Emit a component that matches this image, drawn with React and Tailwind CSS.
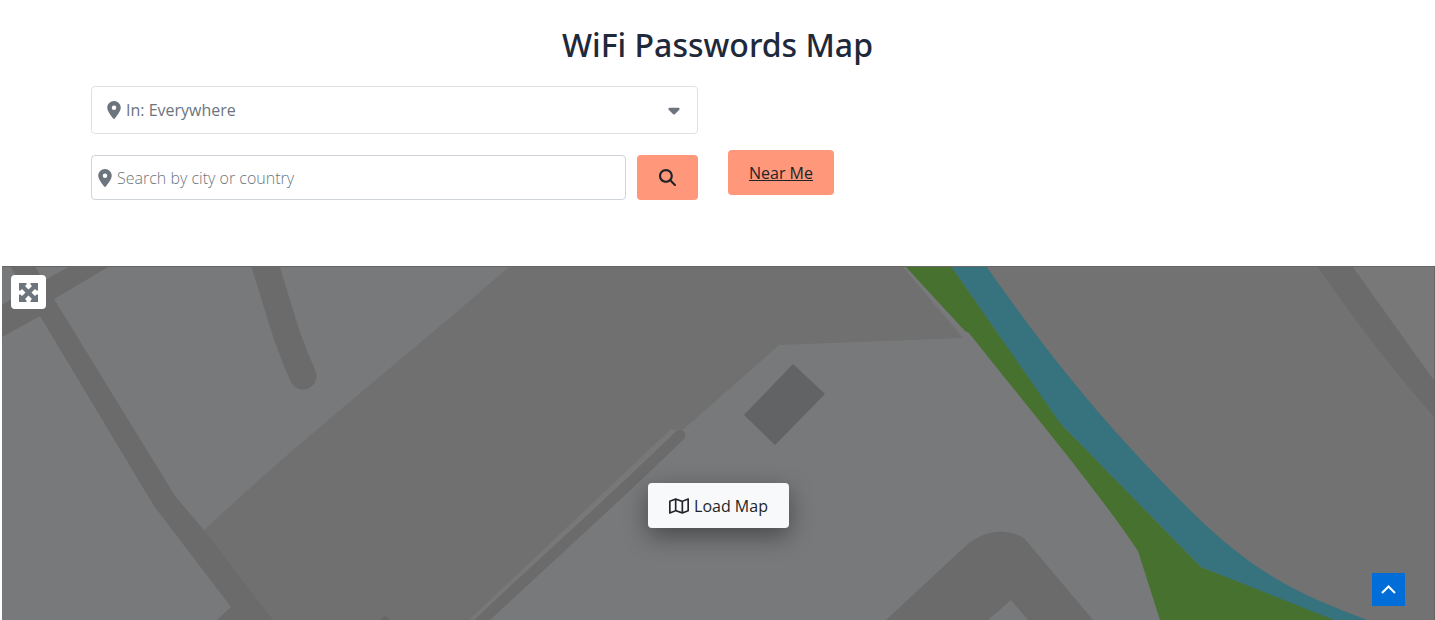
import React, { useState } from 'react';
import { FaLocationDot, FaCaretDown, FaMagnifyingGlass, FaRegMap } from 'react-icons/fa6';

const ExpandIcon = () => (
  <svg className="h-[19px] w-[19px]" viewBox="0 0 19 19" fill="currentColor" aria-hidden="true">
    <path d="M0 0H7.500V1.500L6 3L9.500 6.500L13 3L11.500 1.500V0H19V7.500H17.500L16 6L12.500 9.500L16 13L17.500 11.500H19V19H11.500V17.500L13 16L9.500 12.500L6 16L7.500 17.500V19H0V11.500H1.500L3 13L6.500 9.500L3 6L1.500 7.500H0Z" />
  </svg>
);

const MapTiles = () => (
  <svg
    className="absolute inset-0 h-full w-full"
    viewBox="2 266 1433 354"
    preserveAspectRatio="xMidYMin slice"
    aria-hidden="true"
  >
    <rect x="2" y="266" width="1433" height="354" fill="#78797a" />

    {/* Industrial area */}
    <path d="M510 266H902L963 338L779 345L684 429L672 430L471 620H270L203 531C300 440 400 362 510 266Z" fill="#707070" />
    <path d="M672 430L471 620" stroke="#787878" strokeWidth="3" />
    <path d="M680 435C620 494 550 556 480 622" stroke="#6b6b6b" strokeWidth="11" strokeLinecap="round" fill="none" />

    {/* Streets */}
    <path d="M0 306L70 266H110L54 299L175 496L203 529L273 620H217L231 607L154 506L40 316L0 338Z" fill="#6b6b6b" />
    <path d="M10 266H35L48 290L32 300Z" fill="#6b6b6b" />
    <path d="M264 262C278 304 284 334 303 376" stroke="#6b6b6b" strokeWidth="27" strokeLinecap="round" fill="none" />
    <path d="M886 620L970 542Q998 523 1024 538L1093 620H1028L1011 600L988 620Z" fill="#6b6b6b" />
    <path d="M380 620L385 616L390 620Z" fill="#666" />
    <path d="M793 364L825 394L775 445L744 415Z" fill="#626364" />

    {/* East bank */}
    <path d="M970 266H1435V620H1350L1201 560L1070 420Z" fill="#717271" />
    <path d="M1352 266H1435V382Z" fill="#787879" />
    <path d="M1317 266H1352L1435 382V418Q1375 350 1317 266Z" fill="#6b6b6b" />

    {/* Park strip and river */}
    <path d="M905 266H951L1062 425L1201 567L1338 620H1160L1138 551C1090 480 1025 404 969 333L965 331Z" fill="#47712f" />
    <path d="M951 266H986C1054 362 1105 425 1190 510C1260 580 1310 598 1367 620H1334L1201 567L1060 423Z" fill="#37727f" />

    <path d="M2 266.500H1435M1434.500 266V620" stroke="#666" strokeWidth="1" fill="none" />
  </svg>
);

const App = () => {
  const [place, setPlace] = useState('everywhere');
  const [query, setQuery] = useState('');

  return (
    <div className="flex min-h-screen flex-col bg-white font-['Open_Sans',sans-serif] text-base text-[#212529]">
      <header className="pt-6">
        <h1 className="text-center font-['Noto_Sans',sans-serif] text-[32px] leading-[42px] font-medium text-[#1e293b]">
          WiFi Passwords Map
        </h1>

        <form
          onSubmit={(e) => e.preventDefault()}
          className="mt-5 mb-[66px] grid grid-cols-2 gap-x-[30px] pr-[100px] pl-[91px]"
        >
          <div className="relative text-[#6c757d]">
            <FaLocationDot className="pointer-events-none absolute top-[15px] left-[14px] h-[18px] w-[18px]" />
            <select
              aria-label="Location"
              value={place}
              onChange={(e) => setPlace(e.target.value)}
              className="h-12 w-full appearance-none rounded border border-[#dee2e6] bg-white pl-[34px] text-base"
            >
              <option value="everywhere">In: Everywhere</option>
            </select>
            <FaCaretDown className="pointer-events-none absolute top-[15px] right-[15px] h-[18px] w-[18px]" />
          </div>

          <div className="col-start-1 mt-[21px] flex gap-[11px]">
            <div className="relative flex-1">
              <FaLocationDot className="pointer-events-none absolute top-[14px] left-[5px] h-[18px] w-[18px] text-[#6c757d]" />
              <input
                type="text"
                aria-label="Search by city or country"
                placeholder="Search by city or country"
                value={query}
                onChange={(e) => setQuery(e.target.value)}
                className="h-[45px] w-full rounded border border-[#ced4da] bg-white pl-[25px] font-light placeholder:text-[#6c757d]"
              />
            </div>
            <button
              type="submit"
              aria-label="Search"
              className="flex h-[45px] w-[61px] items-center justify-center rounded bg-[#ff977a]"
            >
              <FaMagnifyingGlass className="h-[17px] w-[17px]" />
            </button>
          </div>

          <div className="mt-4">
            <a
              href="#near"
              className="inline-flex h-[45px] items-center rounded bg-[#ff977a] px-[21px] underline"
            >
              Near Me
            </a>
          </div>
        </form>
      </header>

      <main className="relative ml-[2px] flex flex-1 flex-col items-center overflow-hidden">
        <MapTiles />
        <button
          aria-label="Toggle full screen"
          className="absolute top-[9px] left-[9px] flex h-[34px] w-[35px] items-center justify-center rounded-sm bg-white text-[#6c757d]"
        >
          <ExpandIcon />
        </button>
        <button className="relative mt-[217px] flex h-[45px] items-center gap-[5px] rounded bg-[#f8f9fa] px-[21px] shadow-[0_8px_24px_rgba(0,0,0,0.4)]">
          <FaRegMap className="h-[18px] w-5" />
          Load Map
        </button>
      </main>

      <a
        href="#top"
        aria-label="Back to top"
        className="fixed right-[30px] bottom-[14px] flex h-[33px] w-[33px] items-center justify-center bg-[#006dd9] text-white"
      >
        <svg className="h-4 w-4" viewBox="0 0 16 16" fill="none" stroke="currentColor" strokeWidth="2" aria-hidden="true">
          <path d="M1 11L7.500 4.500L14 11" />
        </svg>
      </a>
    </div>
  );
};

export default App;
